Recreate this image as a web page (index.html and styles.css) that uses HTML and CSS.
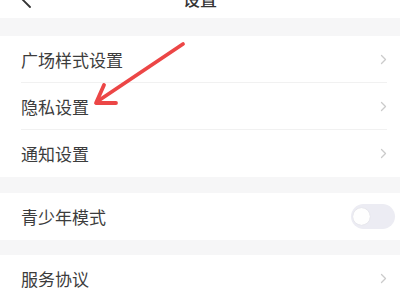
FILE: index.html
```html
<!DOCTYPE html>
<html lang="zh">
<head>
<meta charset="utf-8">
<link rel="stylesheet" href="styles.css">
</head>
<body>
<div class="page">
  <header class="header">
    <svg class="back" width="14" height="20" viewBox="0 0 14 20"><path d="M11 2 L3 10 L11 18" fill="none" stroke="#333" stroke-width="1.8" stroke-linecap="round" stroke-linejoin="round"/></svg>
    <div class="title">设置</div>
  </header>
  <div class="band band-top"></div>
  <div class="group">
    <div class="row"><span class="label">广场样式设置</span><svg class="chev" width="7" height="11" viewBox="0 0 7 11"><path d="M1.5 1.5 L5.5 5.5 L1.5 9.5" fill="none" stroke="#cbcbcb" stroke-width="1.3" stroke-linecap="round" stroke-linejoin="round"/></svg></div>
    <div class="row"><span class="label">隐私设置</span><svg class="chev" width="7" height="11" viewBox="0 0 7 11"><path d="M1.5 1.5 L5.5 5.5 L1.5 9.5" fill="none" stroke="#cbcbcb" stroke-width="1.3" stroke-linecap="round" stroke-linejoin="round"/></svg></div>
    <div class="row last"><span class="label">通知设置</span><svg class="chev" width="7" height="11" viewBox="0 0 7 11"><path d="M1.5 1.5 L5.5 5.5 L1.5 9.5" fill="none" stroke="#cbcbcb" stroke-width="1.3" stroke-linecap="round" stroke-linejoin="round"/></svg></div>
  </div>
  <div class="band band-mid"></div>
  <div class="group">
    <div class="row last"><span class="label">青少年模式</span><span class="toggle"><span class="knob"></span></span></div>
  </div>
  <div class="band band-mid2"></div>
  <div class="group">
    <div class="row last"><span class="label">服务协议</span><svg class="chev" width="7" height="11" viewBox="0 0 7 11"><path d="M1.5 1.5 L5.5 5.5 L1.5 9.5" fill="none" stroke="#cbcbcb" stroke-width="1.3" stroke-linecap="round" stroke-linejoin="round"/></svg></div>
  </div>
  <svg class="arrow" width="400" height="300" viewBox="0 0 400 300">
    <g fill="none" stroke="#ec4646" stroke-width="3.8" stroke-linecap="round" stroke-linejoin="round">
      <path d="M183 44 L98 101"/>
      <path d="M104 85 L96 103 L116 103"/>
    </g>
  </svg>
</div>
</body>
</html>
```
FILE: styles.css
```css
html, body {
  margin: 0;
  padding: 0;
  background: #ffffff;
}
.page {
  position: relative;
  width: 400px;
  height: 300px;
  overflow: hidden;
  font-family: "Noto Sans CJK SC", "Noto Sans", sans-serif;
  color: #383838;
}
.header {
  height: 18px;
  position: relative;
  display: flex;
  justify-content: center;
  align-items: flex-end;
}
.title {
  font-size: 17px;
  line-height: 20px;
  margin-bottom: 9px;
  font-weight: 500;
  color: #333;
}
.back {
  position: absolute;
  left: 19px;
  top: -11px;
}
.band {
  background: #f6f6f7;
}
.band-top { height: 18px; }
.band-mid { height: 16px; }
.band-mid2 { height: 15px; }
.group {
  padding: 0 13px 0 21px;
}
.row {
  height: 47px;
  display: flex;
  align-items: center;
  justify-content: space-between;
  border-bottom: 1px solid #f1f1f1;
  box-sizing: border-box;
}
.row.last {
  border-bottom: none;
}
.label {
  font-size: 17px;
  color: #3c3c3c;
}
.chev {
  display: block;
}
.toggle {
  width: 44px;
  height: 25px;
  border-radius: 13px;
  background: #ececf3;
  display: flex;
  align-items: center;
  padding-left: 2px;
  box-sizing: border-box;
  margin-right: -8px;
}
.knob {
  width: 17px;
  height: 17px;
  border-radius: 50%;
  background: #fefefe;
  box-shadow: 0 0 1px rgba(0,0,0,0.15);
}
.arrow {
  position: absolute;
  left: 0;
  top: 0;
  pointer-events: none;
}
```
